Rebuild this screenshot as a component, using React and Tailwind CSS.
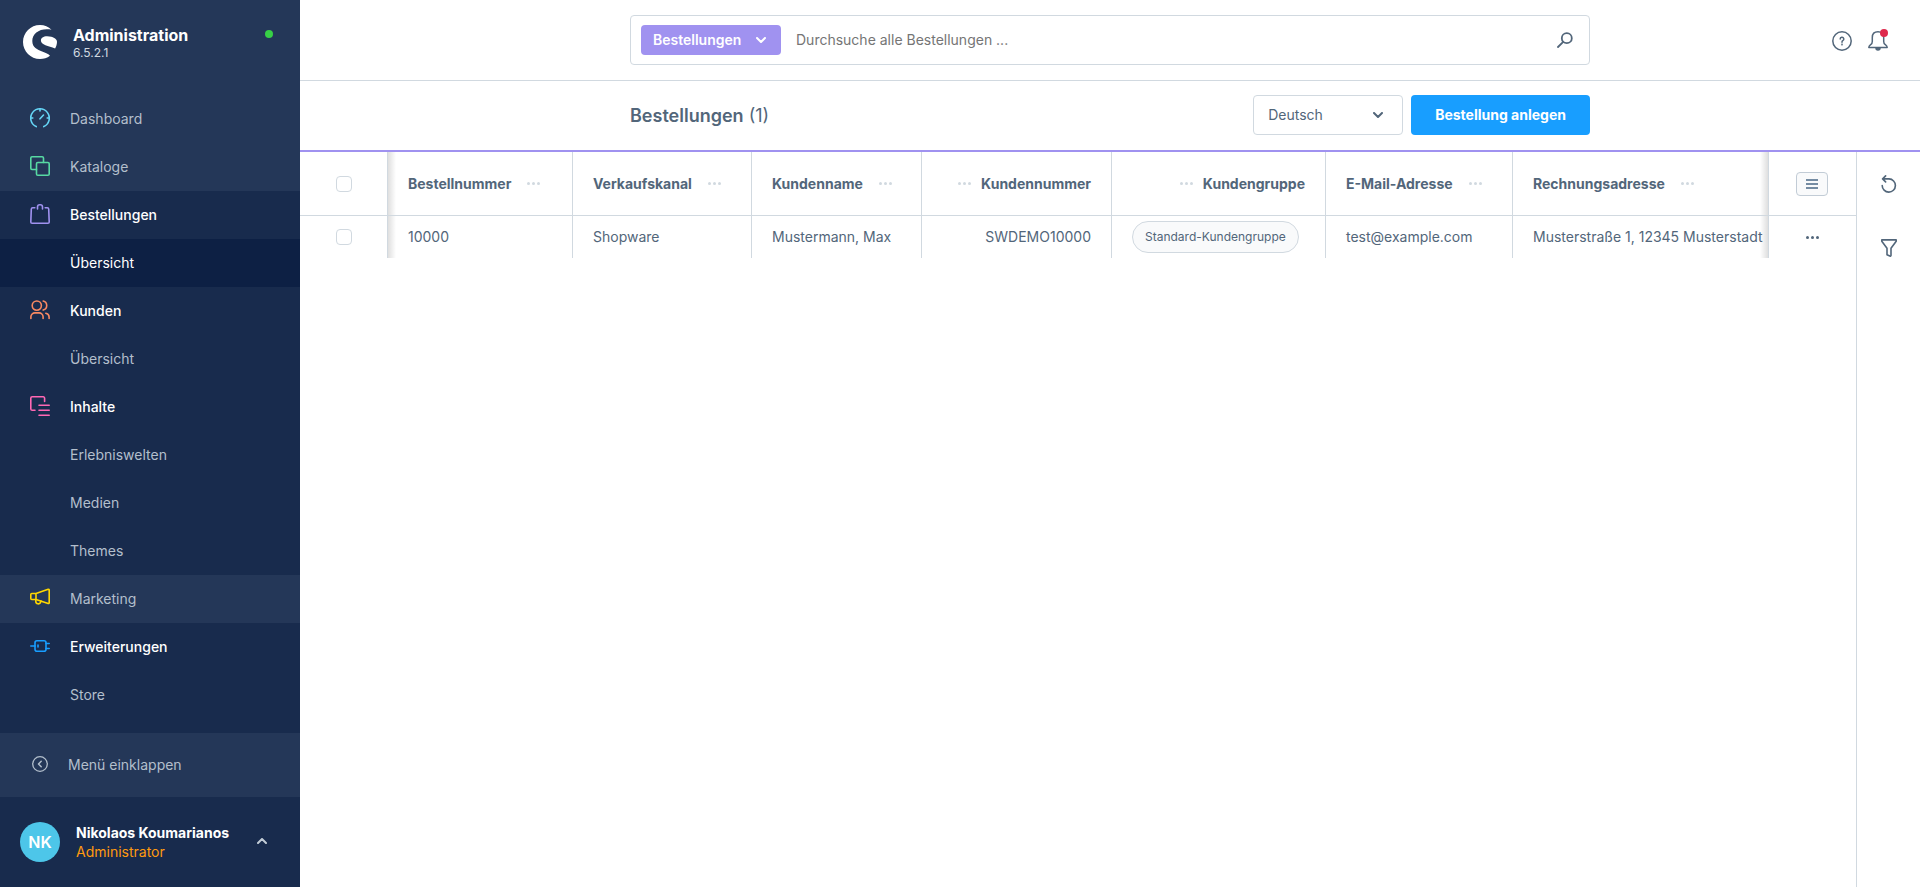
import { useState } from "react";

// Sidebar icons, 20x20 outline style
const icons = {
  dashboard: (
    <>
      <path d="M6.2 18.6a9.3 9.3 0 1 1 7.6 0" />
      <path d="M10 .9v2M.8 10h2M17.2 10h2M10 10.8l3.5-3.8" />
    </>
  ),
  products: (
    <>
      <path d="M6.5 13.5H2A1.3 1.3 0 0 1 .8 12.2V2A1.3 1.3 0 0 1 2 .8h10.2A1.3 1.3 0 0 1 13.5 2v4.5" />
      <rect x="6.5" y="6.5" width="12.7" height="12.7" rx="1.3" />
    </>
  ),
  orders: (
    <>
      <path d="M4.8 3.7H2.7A1.4 1.4 0 0 0 1.3 5L.8 17.9a1.3 1.3 0 0 0 1.3 1.3h15.8a1.3 1.3 0 0 0 1.3-1.3L18.7 5a1.4 1.4 0 0 0-1.4-1.3h-2.1" />
      <path d="M7.5 5V3A2.2 2.2 0 0 1 9.7.8h.6A2.2 2.2 0 0 1 12.5 3v2" />
    </>
  ),
  customers: (
    <>
      <circle cx="6.8" cy="5.6" r="4.6" />
      <path d="M13.2 1a4.7 4.7 0 0 1 0 9.1M.9 18.5v-1.7A4 4 0 0 1 5 12.9h4a4 4 0 0 1 4.1 3.9v1.7M15.8 13.2a4 4 0 0 1 3.3 3.8v1.5" />
    </>
  ),
  content: (
    <path d="M5 14.3H2.2A1.4 1.4 0 0 1 .8 13V2.2A1.4 1.4 0 0 1 2.2.8h11a1.4 1.4 0 0 1 1.4 1.4v3.2M9 9.3h10.2M9 14.3h10.2M9 19.2h10.2" />
  ),
  marketing: (
    <>
      <path d="M6 5.5 18.2 1.3a.8.8 0 0 1 1 .8v12.6a.8.8 0 0 1-1 .8L6 11.5zM6 5.5H1.8a1 1 0 0 0-1 1v4a1 1 0 0 0 1 1H6" />
      <path d="M5.8 11.6v1.6a2.5 2.5 0 0 0 4.9.8l.3-1" />
    </>
  ),
  plugins: (
    <>
      <rect x="5" y="4.7" width="11" height="10.6" rx="2" />
      <path d="M.8 10H5M16 7.5h3.2M16 12.5h3.2M8 9v2" />
    </>
  ),
};

const menu = [
  { label: "Dashboard", icon: "dashboard", color: "text-[#65d5f5]" },
  { label: "Kataloge", icon: "products", color: "text-[#57d9a3]" },
  {
    label: "Bestellungen",
    icon: "orders",
    color: "text-[#a092f0]",
    children: ["Übersicht"],
    current: "Übersicht",
  },
  { label: "Kunden", icon: "customers", color: "text-[#f88962]", children: ["Übersicht"] },
  {
    label: "Inhalte",
    icon: "content",
    color: "text-[#ff68b4]",
    children: ["Erlebniswelten", "Medien", "Themes"],
  },
  { label: "Marketing", icon: "marketing", color: "text-[#ffd700]" },
  { label: "Erweiterungen", icon: "plugins", color: "text-[#189eff]", children: ["Store"] },
];

const columns = [
  { label: "Bestellnummer", width: "w-[185px]" },
  { label: "Verkaufskanal", width: "w-[179px]" },
  { label: "Kundenname", width: "w-[170px]" },
  { label: "Kundennummer", width: "w-[190px]", right: true },
  { label: "Kundengruppe", width: "w-[214px]", right: true },
  { label: "E-Mail-Adresse", width: "w-[187px]" },
  { label: "Rechnungsadresse", width: "" },
];

const orders = [
  {
    number: "10000",
    channel: "Shopware",
    name: "Mustermann, Max",
    customerNumber: "SWDEMO10000",
    group: "Standard-Kundengruppe",
    mail: "test@example.com",
    address: "Musterstraße 1, 12345 Musterstadt",
  },
];

function Chevron({ className }) {
  return (
    <svg viewBox="0 0 10 6" className={className} fill="none" stroke="currentColor" strokeWidth="2" strokeLinecap="round" strokeLinejoin="round">
      <path d="M1 1l4 4 4-4" />
    </svg>
  );
}

function Dots({ className }) {
  return (
    <svg viewBox="0 0 13 3" className={className} fill="currentColor">
      <circle cx="1.5" cy="1.5" r="1.5" />
      <circle cx="6.5" cy="1.5" r="1.5" />
      <circle cx="11.5" cy="1.5" r="1.5" />
    </svg>
  );
}

function MenuGroup({ item }) {
  const open = Boolean(item.children);
  return (
    <li className={open ? "bg-[#182b4d]" : ""}>
      <a
        href="#"
        className={`flex h-12 items-center gap-5 px-[30px] ${open ? "font-medium text-white" : "text-[#b3bfcc]"}`}
      >
        <svg viewBox="0 0 20 20" className={`mb-0.5 size-5 ${item.color}`} fill="none" stroke="currentColor" strokeWidth="1.6" strokeLinecap="round" strokeLinejoin="round">
          {icons[item.icon]}
        </svg>
        {item.label}
      </a>
      {open && (
        <ul>
          {item.children.map((child) => (
            <li key={child}>
              <a
                href="#"
                className={`flex h-12 items-center pl-[70px] ${
                  item.current === child ? "bg-[#0d2044] text-white" : "text-[#b3bfcc]"
                }`}
              >
                {child}
              </a>
            </li>
          ))}
        </ul>
      )}
    </li>
  );
}

function Sidebar() {
  return (
    <aside className="flex w-[300px] shrink-0 flex-col bg-[#243758]">
      <header className="flex h-[95px] items-start gap-4 pr-[27px] pl-[23px] pt-[25px]">
        <svg viewBox="0 0 34 34" className="size-[34px] shrink-0" fill="#fff">
          <path d="M28.5 4.7C25.6 1.8 21.5 0 17 0 7.6 0 0 7.6 0 17s7.6 17 17 17c3.7 0 7.2-1.2 10-3.3-1.2-1.6-4.4-2.8-7.9-4.2C14.5 24.7 9.3 22.5 9.3 16c0-6.800 6-11.700 14.500-11.700 1.700 0 3.200.1 4.700.4z" />
          <path d="M33.5 15c-.2-.7-2.9-3.8-9.400-3.800-3.800 0-6.200 1.600-6.200 4.300 0 4.500 7.500 5.500 14.200 7.900.8-1 1.900-4 1.900-6.400 0-.7-.2-1.400-.5-2z" />
        </svg>
        <div className="flex-1">
          <div className="text-base leading-5 font-bold text-white">Administration</div>
          <div className="text-xs leading-4 text-[#d1d9e0]">6.5.2.1</div>
        </div>
        <span className="mt-[5px] size-2 rounded-full bg-[#37d046]" />
      </header>
      <nav className="flex-1">
        <ul>
          {menu.map((item) => (
            <MenuGroup key={item.label} item={item} />
          ))}
        </ul>
        <div className="h-3.5 bg-[#182b4d]" />
      </nav>
      <button className="flex h-16 items-center gap-5 px-8 text-[#b3bfcc]">
        <svg viewBox="0 0 16 16" className="mb-0.5 size-4" fill="none" stroke="currentColor" strokeLinecap="round" strokeLinejoin="round">
          <circle cx="8" cy="8" r="7.3" strokeWidth="1.3" />
          <path d="M9.2 5.3 6.5 8l2.7 2.7" strokeWidth="1.5" />
        </svg>
        Menü einklappen
      </button>
      <button className="flex h-[90px] items-center gap-4 bg-[#182b4d] px-5 text-left">
        <span className="flex size-10 items-center justify-center rounded-full bg-[#4dc6e9] text-base font-semibold text-white">
          NK
        </span>
        <span className="flex-1 leading-[19px]">
          <span className="block font-bold text-white">Nikolaos Koumarianos</span>
          <span className="block text-[#ff9a0f]">Administrator</span>
        </span>
        <Chevron className="mr-[13px] mb-0.5 w-2.5 rotate-180 text-[#c2ccd6]" />
      </button>
    </aside>
  );
}

function SearchHeader() {
  return (
    <header className="grid h-[81px] grid-cols-[1fr_minmax(0,960px)_1fr] items-center border-b border-[#d1d9e0]">
      <form className="col-start-2 flex h-[50px] items-center rounded border border-[#d1d9e0] pr-4 pl-2.5">
        <button type="button" className="flex h-[30px] w-[140px] items-center justify-between rounded bg-[#a092f0] pr-[15px] pl-3 font-semibold text-white">
          Bestellungen
          <Chevron className="w-2.5" />
        </button>
        <input
          type="search"
          aria-label="Suche"
          placeholder="Durchsuche alle Bestellungen ..."
          className="flex-1 px-[15px] outline-none placeholder:text-[#757575]"
        />
        <button type="button" aria-label="Suchen" className="text-[#52667a]">
          <svg viewBox="0 0 16 16" className="size-4" fill="none" stroke="currentColor" strokeWidth="1.8" strokeLinecap="round">
            <circle cx="9.8" cy="6.2" r="5" />
            <path d="M6.2 9.8 1 15" />
          </svg>
        </button>
      </form>
      <div className="flex items-center justify-end gap-4 pt-0.5 pr-8 text-[#52667a]">
        <button aria-label="Hilfe">
          <svg viewBox="0 0 20 20" className="size-5" fill="none" stroke="currentColor" strokeWidth="1.5" strokeLinecap="round" strokeLinejoin="round">
            <circle cx="10" cy="10" r="9.2" />
            <path d="M8.2 8.1a1.8 1.8 0 1 1 2.6 1.6c-.5.3-.8.6-.8 1.2v.3" />
            <circle cx="10" cy="13.5" r=".3" fill="currentColor" />
          </svg>
        </button>
        <button aria-label="Benachrichtigungen" className="relative">
          <svg viewBox="0 0 20 20" className="size-5" fill="none" stroke="currentColor" strokeWidth="1.5" strokeLinecap="round" strokeLinejoin="round">
            <path d="M10 .8c-3.5 0-5.7 2.3-5.7 5.7v4c0 1.5-.6 2.4-1.6 3.1C1.5 14.5.8 15 .8 16.4h18.4c0-1.4-.7-1.900-1.900-2.800-1-.7-1.600-1.600-1.600-3.100v-4C15.700 3.100 13.500.8 10 .8z" />
            <path d="M8 17a2 2 0 0 0 4 0z" fill="currentColor" />
          </svg>
          <span className="absolute -top-0.5 right-0 size-2 rounded-full bg-[#de294c]" />
        </button>
      </div>
    </header>
  );
}

function SmartBar() {
  return (
    <div className="grid grid-cols-[1fr_minmax(0,960px)_1fr] border-b-2 border-[#a092f0] pt-3.5 pb-[15px]">
      <div className="col-start-2 flex items-center gap-2">
        <h1 className="flex-1 pt-0.5 text-lg text-[#52667a]">
          <span className="font-semibold">Bestellungen</span> (1)
        </h1>
        <div className="relative flex items-center text-[#52667a]">
          <select aria-label="Sprache" className="h-10 w-[150px] appearance-none rounded border border-[#d1d9e0] bg-white px-3.5">
            <option>Deutsch</option>
            <option>English</option>
          </select>
          <Chevron className="pointer-events-none absolute right-5 w-2.5" />
        </div>
        <button className="h-10 rounded bg-[#189eff] px-6 font-bold text-white">
          Bestellung anlegen
        </button>
      </div>
    </div>
  );
}

const boxClass = "block size-4 appearance-none rounded border border-[#d1d9e0] bg-white checked:bg-[#189eff]";

function OrderGrid() {
  const [selected, setSelected] = useState([]);
  const allSelected = selected.length === orders.length;

  const toggle = (number) =>
    setSelected((prev) =>
      prev.includes(number) ? prev.filter((n) => n !== number) : [...prev, number]
    );

  return (
    <table className="w-full table-fixed border-separate border-spacing-0 text-left whitespace-nowrap">
      <thead>
        <tr className="h-16">
          <th className="w-[88px] border-r border-b border-[#d1d9e0] pl-9">
            <input
              type="checkbox"
              aria-label="Alle auswählen"
              className={boxClass}
              checked={allSelected}
              onChange={() => setSelected(allSelected ? [] : orders.map((o) => o.number))}
            />
          </th>
          {columns.map((col, i) => (
            <th
              key={col.label}
              className={`border-b border-[#d1d9e0] px-5 font-bold ${col.width} ${
                i < columns.length - 1 ? "border-r" : ""
              } ${i === 0 ? "bg-linear-to-r from-[#dfdfdf] to-white to-[8px]" : ""} ${
                i === columns.length - 1 ? "bg-linear-to-l from-[#dfdfdf] to-white to-[8px]" : ""
              }`}
            >
              <div className={`flex items-center ${col.right ? "flex-row-reverse gap-2.5" : "gap-4"}`}>
                {col.label}
                <button aria-label={`${col.label} Optionen`}>
                  <Dots className="w-[13px] text-[#d1d9e0]" />
                </button>
              </div>
            </th>
          ))}
          <th className="w-[88px] border-b border-l border-[#d1d9e0] pr-px">
            <button aria-label="Einstellungen" className="mx-auto flex h-6 w-8 items-center justify-center rounded border border-[#c2ccd6] bg-[#f9fafb] text-[#758ca3]">
              <svg viewBox="0 0 12 10" className="mt-px w-3" stroke="currentColor" strokeWidth="2">
                <path d="M0 1h12M0 5h12M0 9h12" />
              </svg>
            </button>
          </th>
        </tr>
      </thead>
      <tbody>
        {orders.map((order) => (
          <tr key={order.number} className="h-[42px] *:border-[#d1d9e0]">
            <td className="border-r pl-9">
              <input
                type="checkbox"
                aria-label={`Bestellung ${order.number} auswählen`}
                className={boxClass}
                checked={selected.includes(order.number)}
                onChange={() => toggle(order.number)}
              />
            </td>
            <td className="border-r bg-linear-to-r from-[#dfdfdf] to-white to-[8px] px-5">{order.number}</td>
            <td className="border-r px-5">{order.channel}</td>
            <td className="border-r px-5">{order.name}</td>
            <td className="border-r px-5 text-right">{order.customerNumber}</td>
            <td className="border-r px-5">
              <span className="inline-flex h-8 items-center rounded-full border border-[#d1d9e0] bg-[#f9fafb] px-3 text-xs">
                {order.group}
              </span>
            </td>
            <td className="border-r px-5">{order.mail}</td>
            <td className="bg-linear-to-l from-[#dfdfdf] to-white to-[8px] pl-5">{order.address}</td>
            <td className="border-l">
              <button aria-label="Aktionen" className="mx-auto block">
                <Dots className="w-[13px]" />
              </button>
            </td>
          </tr>
        ))}
      </tbody>
    </table>
  );
}

export default function App() {
  return (
    <div className="flex min-h-screen bg-white font-['Inter',sans-serif] text-sm text-[#52667a]">
      <Sidebar />
      <div className="flex min-w-0 flex-1 flex-col">
        <SearchHeader />
        <SmartBar />
        <div className="flex flex-1">
          <main className="min-w-0 flex-1">
            <OrderGrid />
          </main>
          <aside className="flex w-16 flex-col border-l border-[#d1d9e0]">
            <button aria-label="Aktualisieren" className="flex h-16 items-center justify-center">
              <svg viewBox="0 0 16 18" className="w-4" fill="none" stroke="currentColor" strokeWidth="1.6" strokeLinecap="round" strokeLinejoin="round">
                <path d="M4.6.9 1.6 3.9l3 3M1.8 3.900H8a6.600 6.600 0 1 1-6.800 6.600" />
              </svg>
            </button>
            <button aria-label="Filter" className="flex h-16 items-center justify-center">
              <svg viewBox="0 0 16 18" className="w-4" fill="none" stroke="currentColor" strokeWidth="1.6" strokeLinecap="round" strokeLinejoin="round">
                <path d="M.8.9h14.4v1.3L10 9.2v7.2q-.2 1-1.2.7L6 15.8V9.2L.8 2.2z" />
              </svg>
            </button>
          </aside>
        </div>
      </div>
    </div>
  );
}
